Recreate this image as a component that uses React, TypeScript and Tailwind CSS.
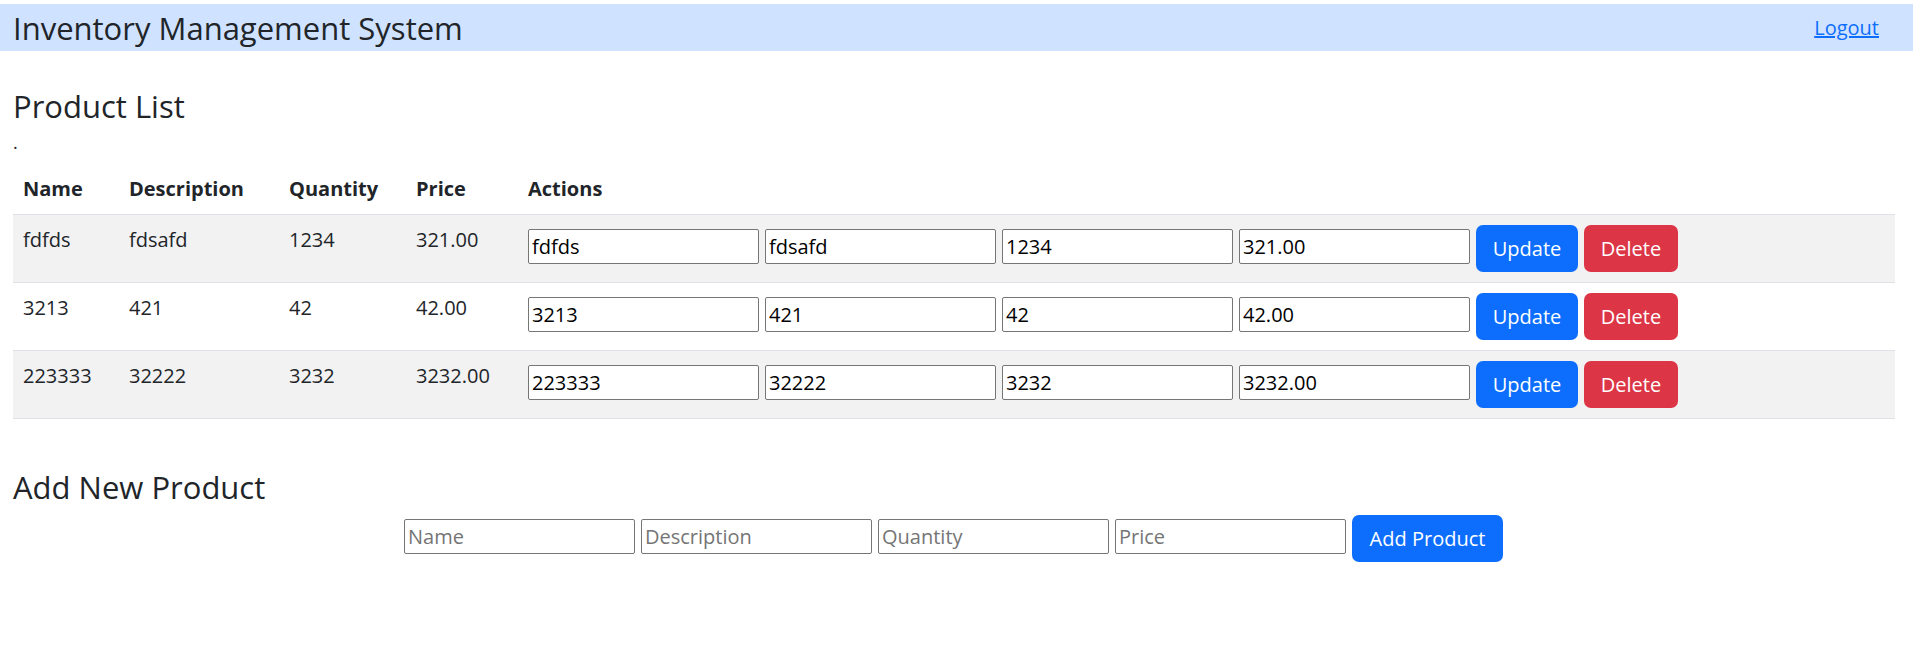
import React from "react";

type Product = { name: string; description: string; quantity: string; price: string };

const products: Product[] = [
  { name: "fdfds", description: "fdsafd", quantity: "1234", price: "321.00" },
  { name: "3213", description: "421", quantity: "42", price: "42.00" },
  { name: "223333", description: "32222", quantity: "3232", price: "3232.00" },
];

function Field({ value, placeholder }: { value?: string; placeholder?: string }) {
  return (
    <input
      defaultValue={value}
      placeholder={placeholder}
      className="mt-[4px] h-[35px] w-[231px] shrink-0 rounded-[2px] border border-[#767676] bg-white px-[3px] text-[20px] text-black outline-none placeholder:text-[#757575]"
    />
  );
}

export default function App() {
  return (
    <div className="min-h-[655px] bg-white font-['Open_Sans','Noto_Sans',sans-serif] text-[20px] text-[#212529]">
      <nav className="mt-[4px] flex h-[47px] items-center justify-between bg-[#cfe2ff] pl-[13px] pr-[34px]">
        <span className="text-[31px] leading-[36px] text-[#212529]">Inventory Management System</span>
        <a href="#" className="text-[20px] text-[#0d6efd] underline">
          Logout
        </a>
      </nav>

      <div className="px-[13px]">
        <h2 className="mt-[37px] text-[31px] leading-[36px] font-normal">Product List</h2>
        <div className="mt-[3px] h-[30px] leading-[30px] text-[18px]">.</div>

        <table className="mt-[6px] w-[1882px] table-fixed border-collapse">
          <colgroup>
            <col className="w-[106px]" />
            <col className="w-[160px]" />
            <col className="w-[127px]" />
            <col className="w-[112px]" />
            <col />
          </colgroup>
          <thead>
            <tr className="border-b border-[#dee2e6]">
              <th className="px-[10px] py-[10px] text-left font-bold leading-[31px]">Name</th>
              <th className="px-[10px] py-[10px] text-left font-bold leading-[31px]">Description</th>
              <th className="px-[10px] py-[10px] text-left font-bold leading-[31px]">Quantity</th>
              <th className="px-[10px] py-[10px] text-left font-bold leading-[31px]">Price</th>
              <th className="px-[10px] py-[10px] text-left font-bold leading-[31px]">Actions</th>
            </tr>
          </thead>
          <tbody>
            {products.map((p, i) => (
              <tr
                key={i}
                className={`border-b border-[#dee2e6] ${i % 2 === 0 ? "bg-[#f2f2f2]" : "bg-white"}`}
              >
                <td className="px-[10px] py-[10px] align-top leading-[30px]">{p.name}</td>
                <td className="px-[10px] py-[10px] align-top leading-[30px]">{p.description}</td>
                <td className="px-[10px] py-[10px] align-top leading-[30px]">{p.quantity}</td>
                <td className="px-[10px] py-[10px] align-top leading-[30px]">{p.price}</td>
                <td className="px-[10px] py-[10px] align-top">
                  <div className="flex items-start gap-[6px]">
                    <Field value={p.name} />
                    <Field value={p.description} />
                    <Field value={p.quantity} />
                    <Field value={p.price} />
                    <button className="h-[47px] w-[102px] shrink-0 rounded-[7px] bg-[#0d6efd] text-[20px] text-white">
                      Update
                    </button>
                    <button className="h-[47px] w-[94px] shrink-0 rounded-[7px] bg-[#dc3545] text-[20px] text-white">
                      Delete
                    </button>
                  </div>
                </td>
              </tr>
            ))}
          </tbody>
        </table>

        <h2 className="mt-[50px] text-[31px] leading-[36px] font-normal">Add New Product</h2>
        <div className="mt-[10px] flex items-start justify-center gap-[6px] pr-[6px]">
          <Field placeholder="Name" />
          <Field placeholder="Description" />
          <Field placeholder="Quantity" />
          <Field placeholder="Price" />
          <button className="h-[47px] w-[151px] shrink-0 rounded-[7px] bg-[#0d6efd] text-[20px] text-white">
            Add Product
          </button>
        </div>
      </div>
    </div>
  );
}
